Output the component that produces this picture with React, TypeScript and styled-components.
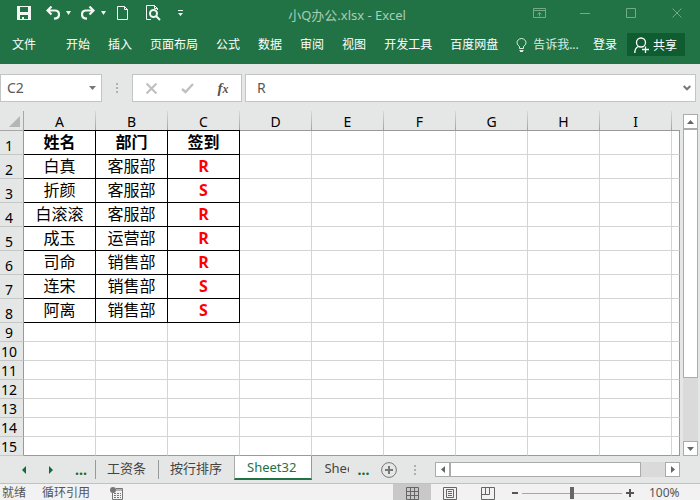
import React from "react";
import styled, { createGlobalStyle, css } from "styled-components";

const GlobalStyle = createGlobalStyle`
  *, *::before, *::after { box-sizing: border-box; }
  body {
    margin: 0;
    background: #e5e7e6;
    font-family: "Noto Sans", "Noto Sans CJK SC", sans-serif;
    font-size: 12px;
    overflow: hidden;
  }
  button, input {
    margin: 0;
    padding: 0;
    border: 0;
    background: none;
    border-radius: 0;
    color: inherit;
    font: inherit;
  }
  svg { display: block; flex: none; }
`;

const Window = styled.div`
  display: flex;
  flex-direction: column;
  min-height: 100vh;
`;

/* ---------- Ribbon ---------- */

const Ribbon = styled.header`
  background: #217346;
  color: #fff;
  padding-bottom: 5px;
`;

const TitleBar = styled.div`
  display: grid;
  grid-template-columns: 1fr auto 1fr;
  height: 30px;
`;

const QuickAccess = styled.div`
  display: flex;
  align-items: center;
  gap: 10px;
  height: 26px;
  padding-left: 17px;
  color: #f2f7f4;
`;

const ToolButton = styled.button<{ $width: number }>`
  display: flex;
  align-items: center;
  gap: 6px;
  width: ${(p) => p.$width}px;
  height: 20px;
  flex: none;
`;

const Title = styled.h1`
  margin: 0 6px 0 0;
  font-size: 13px;
  font-weight: 400;
  line-height: 30px;
  color: #a9cdb8;
  white-space: nowrap;
`;

const WindowControls = styled.div`
  display: flex;
  justify-content: flex-end;
  height: 26px;
  color: #74a98a;
`;

const WindowButton = styled.button`
  display: flex;
  align-items: center;
  justify-content: center;
  width: 46px;
`;

const Menu = styled.nav`
  display: flex;
  align-items: center;
  height: 29px;
  padding: 0 15px 0 12px;
`;

const MenuTabs = styled.div`
  display: flex;
  gap: 18px;
  margin-left: 30px;
`;

const MenuButton = styled.button`
  line-height: 20px;
  white-space: nowrap;
`;

const TellMe = styled.button`
  display: flex;
  align-items: center;
  gap: 6px;
  margin-left: 18px;
  line-height: 20px;
  color: #dcebe2;
  white-space: nowrap;
`;

const Account = styled.div`
  display: flex;
  align-items: center;
  gap: 10px;
  margin-left: auto;
`;

const ShareButton = styled.button`
  display: flex;
  align-items: center;
  gap: 4px;
  height: 23px;
  padding: 0 8px 0 7px;
  background: #0e5c2f;
  white-space: nowrap;
`;

/* ---------- Formula bar ---------- */

const FormulaBar = styled.div`
  display: flex;
  align-items: center;
  padding: 10px 4px 9px 0;
  color: #595959;
`;

const Field = styled.div<{ $grow?: boolean }>`
  display: flex;
  align-items: center;
  height: 28px;
  border: 1px solid #c3c5c4;
  background: #fff;
  ${(p) => (p.$grow ? css`flex: 1; min-width: 0; padding: 0 3px 0 11px;` : css`width: 102px; padding: 0 3px 0 6px;`)}
`;

const FieldInput = styled.input`
  flex: 1;
  min-width: 0;
  height: 24px;
  padding-bottom: 2px;
  font-size: 14px;
  outline: none;
`;

const Grip = styled.span`
  display: flex;
  justify-content: center;
  width: 30px;
  color: #b0b0b0;
`;

const FormulaActions = styled.div`
  display: flex;
  align-items: center;
  width: 110px;
  height: 28px;
  margin-right: 3px;
  border: 1px solid #c3c5c4;
  background: #fff;
`;

const FormulaButton = styled.button`
  display: flex;
  flex: 1;
  align-items: center;
  justify-content: center;
  height: 26px;
  color: #c0c0c0;
`;

const SmallButton = styled.button`
  display: flex;
  align-items: center;
  justify-content: center;
  width: 11px;
  height: 20px;
  color: #777;
`;

/* ---------- Grid ---------- */

const Workspace = styled.main`
  display: flex;
`;

const Sheet = styled.table`
  flex: 1;
  width: 100%;
  min-width: 0;
  table-layout: fixed;
  border-collapse: separate;
  border-spacing: 0;
  color: #000;
`;

const RowHeadCol = styled.col`
  width: 24px;
`;

const DataCol = styled.col`
  width: 72px;
`;

const Corner = styled.td`
  height: 20px;
  padding: 4px 3px 3px 9px;
  border-right: 1px solid #a6a6a6;
  border-bottom: 1px solid #a6a6a6;
`;

const ColHead = styled.th<{ $boxed?: boolean; $last?: boolean }>`
  height: 20px;
  padding: 3px 1px 0 0;
  border-bottom: 1px solid ${(p) => (p.$boxed ? "#000" : "#999")};
  background: ${(p) =>
    p.$last ? "none" : "linear-gradient(#d8dad9, #a0a0a0) right / 1px 100% no-repeat"};
  font-size: 14px;
  font-weight: 400;
  line-height: 16px;
`;

const RowHead = styled.th`
  padding: 0 5px 0 0;
  border-right: 1px solid #999;
  border-bottom: 1px solid #c6c8c7;
  font-size: 14px;
  font-weight: 400;
  line-height: 16px;
  vertical-align: bottom;
`;

const Row = styled.tr<{ $tall?: boolean }>`
  height: ${(p) => (p.$tall ? 24 : 19)}px;
`;

const Cell = styled.td<{ $boxed?: boolean; $bold?: boolean; $mark?: boolean; $edge?: boolean; $end?: boolean }>`
  padding: 0 0 2px;
  background: #fff;
  border-right: 1px solid ${(p) => (p.$boxed ? "#000" : p.$edge ? "#999" : "#d4d4d4")};
  border-bottom: 1px solid ${(p) => (p.$boxed ? "#000" : p.$end ? "#999" : "#d4d4d4")};
  color: ${(p) => (p.$mark ? "#f00" : "#000")};
  font-family: ${(p) => (p.$mark ? '"Open Sans", "Noto Sans CJK SC", sans-serif' : "inherit")};
  font-size: 16px;
  font-weight: ${(p) => (p.$bold || p.$mark ? 700 : 400)};
  line-height: 16px;
  text-align: center;
  white-space: nowrap;
`;

/* ---------- Scroll bars ---------- */

const VerticalScroll = styled.div`
  display: flex;
  flex-direction: column;
  flex: none;
  width: 15px;
  margin: 3px 2px 0 3px;
  background: #dadada;
`;

const ScrollButton = styled.button`
  display: flex;
  flex: none;
  align-items: center;
  justify-content: center;
  width: 15px;
  height: 15px;
  border: 1px solid #ababab;
  background: #fff;
  color: #666;
`;

const VerticalTrack = styled.div`
  display: grid;
  flex: 1;
  grid-template-rows: 249fr 63fr;
`;

const Thumb = styled.div`
  border: 1px solid #ababab;
  background: #fff;
`;

const HorizontalScroll = styled.div`
  display: flex;
  flex: 1;
  min-width: 0;
  height: 15px;
  margin-right: 20px;
  background: #dadada;
`;

const HorizontalTrack = styled.div`
  display: grid;
  flex: 1;
  grid-template-columns: 191fr 24fr;
`;

/* ---------- Sheet tabs ---------- */

const TabBar = styled.div`
  display: flex;
  align-items: center;
  height: 28px;
  border-bottom: 1px solid #c0c2c1;
  color: #444;
`;

const TabNav = styled.div`
  display: flex;
  align-items: center;
  justify-content: space-between;
  width: 95px;
  padding: 0 8px 0 22px;
  color: #116b3b;
`;

const DotsButton = styled.button`
  width: 12px;
  font-size: 14px;
  font-weight: 700;
  line-height: 20px;
  color: #116b3b;
`;

const SheetTab = styled.button<{ $active?: boolean; $clipped?: boolean }>`
  font-size: 13px;
  line-height: 14px;
  white-space: nowrap;
  ${(p) =>
    p.$active
      ? css`
          align-self: flex-start;
          height: 24px;
          padding: 0 15px 0 12px;
          border-left: 1px solid #ababab;
          border-right: 1px solid #999;
          border-bottom: 2px solid #217346;
          background: #fff;
          color: #217346;
        `
      : css`
          height: 19px;
          padding: 0 12px 4px 11px;
          border-left: 1px solid #999;
        `}
  ${(p) =>
    p.$clipped &&
    css`
      width: 37px;
      padding: 0 0 4px 12px;
      border: 0;
      overflow: hidden;
      text-align: left;
    `}
`;

const TabActions = styled.div`
  display: flex;
  align-items: center;
  width: 86px;
  padding-left: 8px;
  gap: 12px;
`;

const TabGrip = styled(Grip)`
  width: 20px;
  margin-left: -4px;
`;

/* ---------- Status bar ---------- */

const StatusBar = styled.footer`
  display: flex;
  flex: 1;
  min-height: 17px;
  background: #f1f2f1;
  color: #555;
  line-height: 17px;
`;

const StatusText = styled.div`
  display: flex;
  gap: 16px;
  padding-left: 2px;
  white-space: nowrap;
`;

const MacroButton = styled.button`
  display: flex;
  align-items: flex-start;
  margin-left: 20px;
  padding-top: 3px;
`;

const Views = styled.div`
  display: flex;
  margin-left: auto;
`;

const ViewButton = styled.button<{ $on?: boolean }>`
  display: flex;
  align-items: flex-start;
  justify-content: center;
  width: 38px;
  padding-top: 3px;
  background: ${(p) => (p.$on ? "#c8c8c8" : "none")};
  color: #666;
`;

const Zoom = styled.div`
  display: flex;
  align-items: center;
  gap: 4px;
  padding: 1px 17px 0 5px;
  color: #555;
`;

const ZoomRange = styled.input`
  width: 100px;
  height: 12px;
  appearance: none;
  background: linear-gradient(#a6a6a6, #a6a6a6) center / 100% 1px no-repeat;
  &::-webkit-slider-thumb {
    appearance: none;
    width: 4px;
    height: 12px;
    background: #666;
  }
`;

const ZoomValue = styled.output`
  width: 34px;
  margin-left: 11px;
  line-height: 16px;
`;

/* ---------- Icons ---------- */

const SaveIcon = () => (
  <svg width="14" height="14" viewBox="0 0 14 14" fill="currentColor" aria-hidden="true">
    <path fillRule="evenodd" d="M0 0h14v14H0zM3 1v5h8V1zM3 9v4h2v-2h2v2h4V9z" />
  </svg>
);

const ArrowIcon = ({ flip }: { flip?: boolean }) => (
  <svg width="14" height="14" viewBox="0 0 14 14" fill="none" stroke="currentColor" strokeWidth="2.200" aria-hidden="true">
    <g transform={flip ? "matrix(-1 0 0 1 14 0)" : undefined}>
      <path d="M5.500 0.500L1.500 4.500L5.500 8.500M1.500 4.500H9Q13 4.500 13 8.500Q13 12.500 8 12.700" />
    </g>
  </svg>
);

const Caret = ({ up, size = 5 }: { up?: boolean; size?: number }) => (
  <svg width={size} height="4" viewBox="0 0 8 4" preserveAspectRatio="none" fill="currentColor" aria-hidden="true">
    <path d={up ? "M0 4L4 0L8 4z" : "M0 0H8L4 4z"} />
  </svg>
);

const SideArrow = ({ right, height = 8 }: { right?: boolean; height?: number }) => (
  <svg width="4" height={height} viewBox="0 0 4 8" preserveAspectRatio="none" fill="currentColor" aria-hidden="true">
    <path d={right ? "M0 0L4 4L0 8z" : "M4 0L0 4L4 8z"} />
  </svg>
);

const DocIcon = () => (
  <svg width="13" height="14" viewBox="0 0 13 14" fill="none" stroke="currentColor" aria-hidden="true">
    <path d="M1.500 .5H8.500L11.500 3.500V13.500H1.500zM8.500 .5V3.500H11.500" />
  </svg>
);

const PreviewIcon = () => (
  <svg width="15" height="16" viewBox="0 0 15 16" fill="none" stroke="currentColor" aria-hidden="true">
    <path d="M5 14.500H.5V.5H8.500L11.500 3.500V5M8.500 .5V3.500H11.500" />
    <circle cx="7.500" cy="8.500" r="3.500" strokeWidth="2" />
    <path d="M10 11L14 15" strokeWidth="2" />
  </svg>
);

const CustomizeIcon = () => (
  <svg width="5" height="6" viewBox="0 0 5 6" fill="currentColor" aria-hidden="true">
    <path d="M0 0h5v1H0zM0 3h5L2.500 6z" />
  </svg>
);

const BulbIcon = () => (
  <svg width="11" height="14" viewBox="0 0 11 14" fill="none" stroke="currentColor" aria-hidden="true">
    <path d="M3.500 10.500V8.500Q1 7 1 4.800A4.500 4.300 0 0 1 10 4.800Q10 7 7.500 8.500V10.500z" />
    <path d="M3.500 12.500H7.500M4 13.500H7" />
  </svg>
);

const PersonIcon = () => (
  <svg width="15" height="16" viewBox="0 0 15 16" fill="none" stroke="currentColor" strokeWidth="1.300" aria-hidden="true">
    <circle cx="7" cy="5.500" r="4.500" />
    <path d="M.8 16Q.8 11 4.500 9.500M11.500 9.500V16M8 12.500H15" />
  </svg>
);

const RibbonOptionsIcon = () => (
  <svg width="13" height="10" viewBox="0 0 13 10" fill="none" stroke="currentColor" aria-hidden="true">
    <path d="M.5 .5H12.500V9.500H.5zM.5 2.500H12.500M6.500 8.500V4.500M4.500 6.500L6.500 4.500L8.500 6.500" />
  </svg>
);

const MinimizeIcon = () => (
  <svg width="10" height="10" viewBox="0 0 10 10" stroke="currentColor" aria-hidden="true">
    <path d="M0 5.500H10" />
  </svg>
);

const MaximizeIcon = () => (
  <svg width="10" height="10" viewBox="0 0 10 10" fill="none" stroke="currentColor" aria-hidden="true">
    <path d="M.5 .5H9.500V9.500H.5z" />
  </svg>
);

const CloseIcon = ({ size = 10, weight = 1 }: { size?: number; weight?: number }) => (
  <svg width={size} height={size} viewBox="0 0 10 10" stroke="currentColor" strokeWidth={weight} aria-hidden="true">
    <path d="M.5 .5L9.500 9.500M9.500 .5L.5 9.500" />
  </svg>
);

const CheckIcon = () => (
  <svg width="13" height="11" viewBox="0 0 13 11" fill="none" stroke="currentColor" strokeWidth="2.400" aria-hidden="true">
    <path d="M1 6L4.500 9L12 1" />
  </svg>
);

const FxLabel = styled.span`
  color: #555;
  font-family: "Liberation Serif", serif;
  font-size: 15px;
  font-style: italic;
  font-weight: 700;
  line-height: 20px;
  small { font-size: 12px; }
`;

const ChevronIcon = () => (
  <svg width="8" height="6" viewBox="0 0 8 6" fill="none" stroke="currentColor" strokeWidth="2" aria-hidden="true">
    <path d="M.7 1L4 4.300L7.300 1" />
  </svg>
);

const GripIcon = () => (
  <svg width="2" height="10" viewBox="0 0 2 10" fill="currentColor" aria-hidden="true">
    <path d="M0 0h2v2H0zM0 4h2v2H0zM0 8h2v2H0z" />
  </svg>
);

const CornerIcon = () => (
  <svg width="11" height="11" viewBox="0 0 11 11" fill="#b4b6b5" aria-hidden="true">
    <path d="M11 0V11H0z" />
  </svg>
);

const AddIcon = () => (
  <svg width="16" height="16" viewBox="0 0 16 16" fill="none" stroke="#777" aria-hidden="true">
    <circle cx="8" cy="8" r="7.400" />
    <path d="M8 4V12M4 8H12" strokeWidth="2" />
  </svg>
);

const MacroIcon = () => (
  <svg width="13" height="13" viewBox="0 0 13 13" fill="none" stroke="#777" aria-hidden="true">
    <path d="M6 1.500H12.500V12.500H2.500V6M6 3H12.500" />
    <path d="M4 6.500H11M4 8.500H11M4 10.500H11" strokeDasharray="2 1" />
    <circle cx="3" cy="3" r="3" fill="#777" stroke="none" />
  </svg>
);

const GridViewIcon = () => (
  <svg width="13" height="13" viewBox="0 0 13 13" fill="none" stroke="currentColor" aria-hidden="true">
    <path d="M.5 .5H12.500V12.500H.5zM4.500 .5V12.500M8.500 .5V12.500M.5 4.500H12.500M.5 8.500H12.500" />
  </svg>
);

const PageViewIcon = () => (
  <svg width="14" height="13" viewBox="0 0 14 13" fill="none" stroke="currentColor" aria-hidden="true">
    <path d="M.5 .5H13.500V12.500H.5zM3.500 2.500H10.500V10.500H3.500zM5 4.500H9M5 6.500H9M5 8.500H9" />
  </svg>
);

const BreakViewIcon = () => (
  <svg width="14" height="13" viewBox="0 0 14 13" fill="none" stroke="currentColor" aria-hidden="true">
    <path d="M.5 .5H13.500V12.500H.5zM4.500 .5V7.500M8.500 .5V7.500M.5 7.500H8.500" />
  </svg>
);

const SignIcon = ({ plus }: { plus?: boolean }) => (
  <svg width={plus ? 8 : 6} height="8" viewBox={plus ? "0 0 8 8" : "0 0 6 8"} fill="currentColor" aria-hidden="true">
    <path d={plus ? "M3 0h2v3h3v2H5v3H3V5H0V3h3z" : "M0 3h6v2H0z"} />
  </svg>
);

const IconButton = styled.button`
  display: flex;
  flex: none;
`;

/* ---------- Data ---------- */

const menuItems = ["开始", "插入", "页面布局", "公式", "数据", "审阅", "视图", "开发工具", "百度网盘"];
const columns = ["A", "B", "C", "D", "E", "F", "G", "H", "I"];
const records = [
  ["姓名", "部门", "签到"],
  ["白真", "客服部", "R"],
  ["折颜", "客服部", "S"],
  ["白滚滚", "客服部", "R"],
  ["成玉", "运营部", "R"],
  ["司命", "销售部", "R"],
  ["连宋", "销售部", "S"],
  ["阿离", "销售部", "S"],
];
const rowCount = 15;

export default function App() {
  return (
    <Window>
      <GlobalStyle />
      <Ribbon>
        <TitleBar>
          <QuickAccess>
            <ToolButton $width={19} aria-label="保存"><SaveIcon /></ToolButton>
            <ToolButton $width={25} aria-label="撤消"><ArrowIcon /><Caret /></ToolButton>
            <ToolButton $width={25} aria-label="恢复"><ArrowIcon flip /><Caret /></ToolButton>
            <ToolButton $width={20} aria-label="新建"><DocIcon /></ToolButton>
            <ToolButton $width={22} aria-label="打印预览"><PreviewIcon /></ToolButton>
            <ToolButton $width={5} aria-label="自定义快速访问工具栏"><CustomizeIcon /></ToolButton>
          </QuickAccess>
          <Title>小Q办公.xlsx - Excel</Title>
          <WindowControls>
            <WindowButton aria-label="功能区显示选项"><RibbonOptionsIcon /></WindowButton>
            <WindowButton aria-label="最小化"><MinimizeIcon /></WindowButton>
            <WindowButton aria-label="最大化"><MaximizeIcon /></WindowButton>
            <WindowButton aria-label="关闭"><CloseIcon /></WindowButton>
          </WindowControls>
        </TitleBar>
        <Menu>
          <MenuButton>文件</MenuButton>
          <MenuTabs>
            {menuItems.map((name) => (
              <MenuButton key={name}>{name}</MenuButton>
            ))}
          </MenuTabs>
          <TellMe><BulbIcon />告诉我...</TellMe>
          <Account>
            <MenuButton>登录</MenuButton>
            <ShareButton><PersonIcon />共享</ShareButton>
          </Account>
        </Menu>
      </Ribbon>

      <FormulaBar>
        <Field>
          <FieldInput aria-label="名称框" defaultValue="C2" />
          <SmallButton aria-label="名称列表"><Caret size={7} /></SmallButton>
        </Field>
        <Grip><GripIcon /></Grip>
        <FormulaActions>
          <FormulaButton aria-label="取消"><CloseIcon size={11} weight={2} /></FormulaButton>
          <FormulaButton aria-label="输入"><CheckIcon /></FormulaButton>
          <FormulaButton aria-label="插入函数"><FxLabel>f<small>x</small></FxLabel></FormulaButton>
        </FormulaActions>
        <Field $grow>
          <FieldInput aria-label="编辑栏" defaultValue="R" />
          <SmallButton aria-label="展开编辑栏"><ChevronIcon /></SmallButton>
        </Field>
      </FormulaBar>

      <Workspace>
        <Sheet>
          <colgroup>
            <RowHeadCol />
            {columns.map((c) => <DataCol key={c} />)}
            <col />
          </colgroup>
          <thead>
            <tr>
              <Corner><CornerIcon /></Corner>
              {columns.map((c, i) => (
                <ColHead key={c} scope="col" $boxed={i < 3}>{c}</ColHead>
              ))}
              <ColHead $last />
            </tr>
          </thead>
          <tbody>
            {Array.from({ length: rowCount }, (_, r) => {
              const record = records[r];
              const end = r === rowCount - 1;
              return (
                <Row key={r} $tall={!!record}>
                  <RowHead scope="row">{r + 1}</RowHead>
                  {columns.map((c, i) => (
                    <Cell
                      key={c}
                      $boxed={!!record && i < 3}
                      $bold={r === 0}
                      $mark={r > 0 && i === 2}
                      $end={end}
                    >
                      {record?.[i]}
                    </Cell>
                  ))}
                  <Cell $edge $end={end} />
                </Row>
              );
            })}
          </tbody>
        </Sheet>
        <VerticalScroll>
          <ScrollButton aria-label="向上滚动"><Caret up size={7} /></ScrollButton>
          <VerticalTrack><Thumb /></VerticalTrack>
          <ScrollButton aria-label="向下滚动"><Caret size={7} /></ScrollButton>
        </VerticalScroll>
      </Workspace>

      <TabBar>
        <TabNav>
          <IconButton aria-label="上一张工作表"><SideArrow /></IconButton>
          <IconButton aria-label="下一张工作表"><SideArrow right /></IconButton>
          <DotsButton>...</DotsButton>
        </TabNav>
        <SheetTab>工资条</SheetTab>
        <SheetTab>按行排序</SheetTab>
        <SheetTab $active>Sheet32</SheetTab>
        <SheetTab $clipped>Shee</SheetTab>
        <TabActions>
          <DotsButton>...</DotsButton>
          <IconButton aria-label="新工作表"><AddIcon /></IconButton>
          <TabGrip><GripIcon /></TabGrip>
        </TabActions>
        <HorizontalScroll>
          <ScrollButton aria-label="向左滚动"><SideArrow height={7} /></ScrollButton>
          <HorizontalTrack><Thumb /></HorizontalTrack>
          <ScrollButton aria-label="向右滚动"><SideArrow right height={7} /></ScrollButton>
        </HorizontalScroll>
      </TabBar>

      <StatusBar>
        <StatusText>
          <span>就绪</span>
          <span>循环引用</span>
        </StatusText>
        <MacroButton aria-label="录制宏"><MacroIcon /></MacroButton>
        <Views>
          <ViewButton $on aria-label="普通"><GridViewIcon /></ViewButton>
          <ViewButton aria-label="页面布局视图"><PageViewIcon /></ViewButton>
          <ViewButton aria-label="分页预览"><BreakViewIcon /></ViewButton>
        </Views>
        <Zoom>
          <IconButton aria-label="缩小"><SignIcon /></IconButton>
          <ZoomRange type="range" aria-label="显示比例" min={0} max={100} defaultValue={50} />
          <IconButton aria-label="放大"><SignIcon plus /></IconButton>
          <ZoomValue>100%</ZoomValue>
        </Zoom>
      </StatusBar>
    </Window>
  );
}
